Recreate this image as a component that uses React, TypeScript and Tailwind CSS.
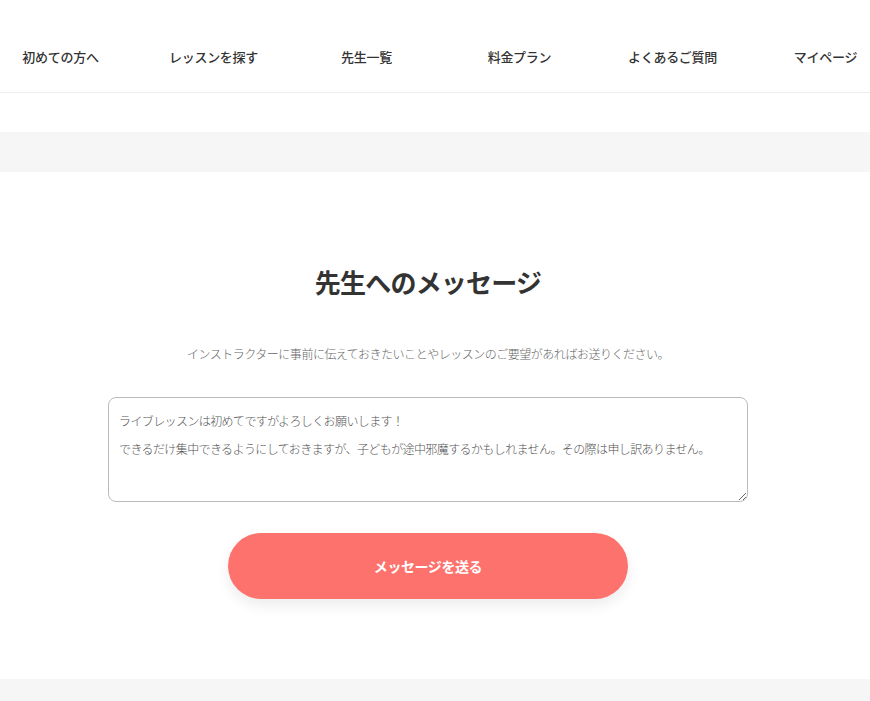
import { useState } from "react";

const navItems = ["初めての方へ", "レッスンを探す", "先生一覧", "料金プラン", "よくあるご質問", "マイページ"];

const initialMessage =
  "ライブレッスンは初めてですがよろしくお願いします！\nできるだけ集中できるようにしておきますが、子どもが途中邪魔するかもしれません。その際は申し訳ありません。";

export default function App() {
  const [message, setMessage] = useState(initialMessage);

  return (
    <div className="min-h-[701px] overflow-hidden bg-white font-['Noto_Sans_CJK_JP','Noto_Sans',sans-serif] text-[#333]">
      <header className="border-b border-[#eeeeee]">
        <nav className="-ml-[16px] flex h-[92px] items-center pt-[22px]">
          {navItems.map((item) => (
            <a
              key={item}
              href="#"
              className="w-[153px] shrink-0 text-center text-[13px] font-medium tracking-[-0.02em] text-[#333]"
            >
              {item}
            </a>
          ))}
        </nav>
      </header>

      <div className="h-[39px]" />
      <div className="h-[40px] bg-[#f6f6f6]" />

      <section className="flex h-[507px] flex-col items-center pr-[14px] pt-[88px]">
        <h2 className="text-[26px] font-bold leading-[44px] tracking-[-0.03em] text-[#333]">
          先生へのメッセージ
        </h2>
        <p className="mt-[42px] text-[12px] font-light leading-[16px] tracking-[-0.04em] text-[#666]">
          インストラクターに事前に伝えておきたいことやレッスンのご要望があればお送りください。
        </p>

        <textarea
          value={message}
          onChange={(e) => setMessage(e.target.value)}
          className="mt-[35px] h-[105px] w-[640px] resize-y rounded-[8px] border border-[#bbbbbb] px-[10px] py-[9px] text-[12px] font-light leading-[28px] tracking-[-0.05em] text-[#555] outline-none"
        />

        <button className="mt-[31px] h-[66px] w-[400px] rounded-full bg-[#fe726d] text-[14px] font-bold tracking-[-0.03em] text-white shadow-[0_6px_14px_rgba(0,0,0,0.08)]">
          メッセージを送る
        </button>
      </section>

      <div className="h-[40px] bg-[#f6f6f6]" />
    </div>
  );
}
